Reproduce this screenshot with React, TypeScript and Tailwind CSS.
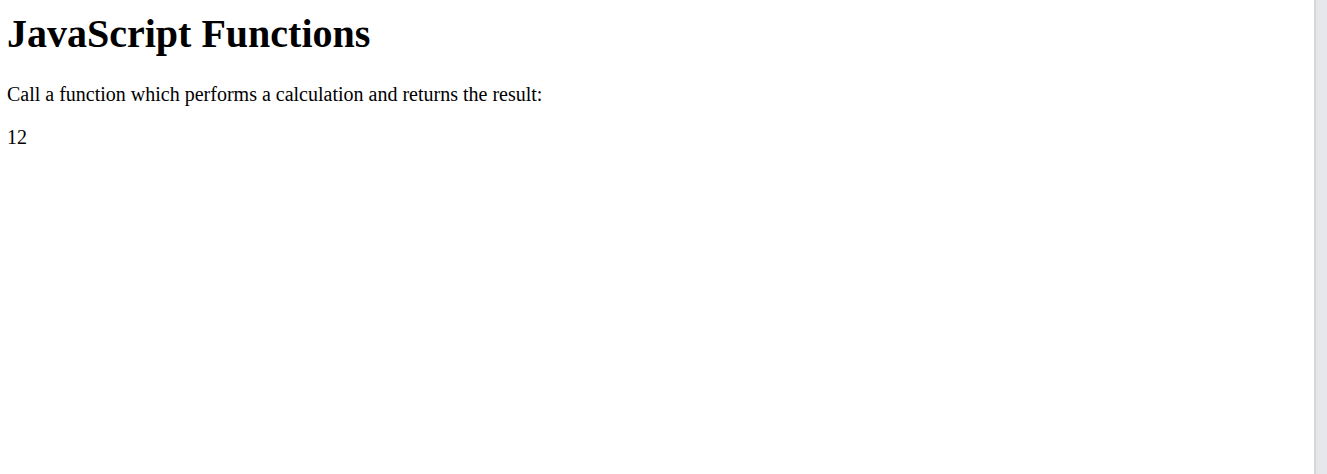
export default function App() {
  return (
    <div className="flex h-screen w-full bg-white text-black font-['Liberation_Serif','Times_New_Roman',serif]">
      <div className="flex-1 pl-[7px] pt-[11px]">
        <h1 className="text-[40px] font-bold leading-[46px] mb-[26px]">JavaScript Functions</h1>
        <p className="text-[20px] leading-[23px] mb-[20px]">
          Call a function which performs a calculation and returns the result:
        </p>
        <p className="text-[20px] leading-[23px]">12</p>
      </div>
      {/* scrollbar strip */}
      <div className="w-[13px] h-full bg-[#e6e7ea] border-l-2 border-[#d6d6d8]" />
    </div>
  );
}
